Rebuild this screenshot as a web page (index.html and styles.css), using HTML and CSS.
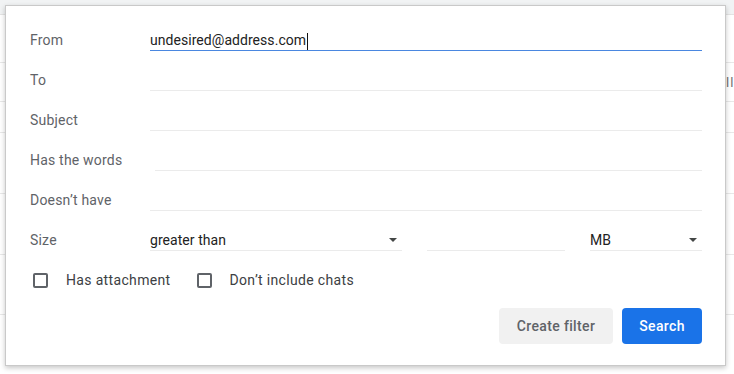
FILE: index.html
```html
<!DOCTYPE html>
<html lang="en">
<head>
<meta charset="utf-8">
<title>Search filter</title>
<link rel="stylesheet" href="styles.css">
</head>
<body>
<div class="page">
  <div class="topbar"></div>
  <div class="bg-row bg-r1"></div>
  <div class="bg-row bg-r2"><span class="bg-text">ll</span></div>
  <div class="bg-row bg-r3"></div>
  <div class="bg-row bg-r4"></div>
  <div class="bg-row bg-r5"></div>
  <div class="bg-row bg-r6"></div>
</div>

<div class="dialog">
  <div class="row">
    <label class="label">From</label>
    <div class="field field-active"><span class="value">undesired@address.com</span><span class="caret"></span></div>
  </div>
  <div class="row">
    <label class="label">To</label>
    <div class="field"></div>
  </div>
  <div class="row">
    <label class="label">Subject</label>
    <div class="field"></div>
  </div>
  <div class="row">
    <label class="label">Has the words</label>
    <div class="field field-shift"></div>
  </div>
  <div class="row">
    <label class="label">Doesn’t have</label>
    <div class="field"></div>
  </div>
  <div class="row">
    <label class="label">Size</label>
    <div class="size-group">
      <div class="select select-op"><span class="value">greater than</span><span class="arrow"></span></div>
      <div class="field field-num"></div>
      <div class="select select-unit"><span class="value">MB</span><span class="arrow"></span></div>
    </div>
  </div>
  <div class="row row-checks">
    <span class="checkbox"></span><span class="check-label">Has attachment</span>
    <span class="checkbox checkbox-2"></span><span class="check-label">Don’t include chats</span>
  </div>
  <div class="actions">
    <button class="btn btn-secondary">Create filter</button>
    <button class="btn btn-primary">Search</button>
  </div>
</div>
</body>
</html>
```

FILE: styles.css
```css
html, body {
  margin: 0;
  padding: 0;
  background: #ffffff;
  font-family: Roboto, "Liberation Sans", Arial, sans-serif;
  overflow: hidden;
}

.page {
  width: 734px;
  height: 374px;
}

.topbar {
  height: 14px;
  background: #f1f3f4;
  border-bottom: 1px solid #e3e3e3;
}

.bg-row {
  border-bottom: 1px solid #e8e8e8;
  box-sizing: border-box;
}

.bg-r1 { height: 48px; }
.bg-r2 {
  height: 39px;
  display: flex;
  align-items: center;
  padding-left: 726px;
  white-space: nowrap;
}
.bg-r3 { height: 31px; }
.bg-r4 { height: 61px; }
.bg-r5 { height: 61px; }
.bg-r6 { height: 60px; }

.bg-text {
  font-size: 13px;
  color: #707070;
  letter-spacing: 1px;
}

.dialog {
  position: absolute;
  left: 5px;
  top: 5px;
  width: 721px;
  height: 361px;
  box-sizing: border-box;
  background: #ffffff;
  border: 1px solid #c9c9c9;
  box-shadow: 0 2px 5px rgba(0, 0, 0, 0.22);
  padding: 14px 23px 0 24px;
  display: flex;
  flex-direction: column;
}

.row {
  height: 40px;
  display: flex;
  align-items: center;
}

.label {
  width: 120px;
  flex: none;
  font-size: 14px;
  color: #5f6368;
  letter-spacing: 0.2px;
}

.field {
  flex: 1;
  height: 20px;
  box-sizing: border-box;
  border-bottom: 1px solid #ebebeb;
  display: flex;
  align-items: center;
  margin-top: 1px;
}

.field-active {
  border-bottom-color: #4a87e0;
}

.field-shift {
  margin-left: 5px;
}

.value {
  font-size: 14px;
  color: #222222;
  line-height: 18px;
  letter-spacing: 0.05px;
}

.caret {
  width: 1px;
  height: 17px;
  background: #111111;
  margin-left: 1px;
  align-self: flex-end;
}

.size-group {
  flex: 1;
  display: flex;
  gap: 25px;
}

.select {
  height: 20px;
  box-sizing: border-box;
  border-bottom: 1px solid #ebebeb;
  display: flex;
  align-items: center;
  justify-content: space-between;
  margin-top: 1px;
}

.select-op { width: 252px; }
.field-num { flex: none; width: 138px; }
.select-unit { flex: 1; }

.arrow {
  width: 0;
  height: 0;
  border-left: 4px solid transparent;
  border-right: 4px solid transparent;
  border-top: 4px solid #444746;
  margin-right: 5px;
}

.row-checks {
  padding-left: 3px;
}

.checkbox {
  width: 15px;
  height: 15px;
  box-sizing: border-box;
  border: 2px solid #5f6368;
  border-radius: 2px;
  flex: none;
}

.checkbox-2 {
  margin-left: 26px;
}

.check-label {
  font-size: 14px;
  color: #3c4043;
  margin-left: 18px;
  letter-spacing: 0.34px;
}

.actions {
  display: flex;
  justify-content: flex-end;
  gap: 9px;
  margin-top: 8px;
}

.btn {
  height: 36px;
  border: none;
  border-radius: 4px;
  font-family: Roboto, "Liberation Sans", Arial, sans-serif;
  font-size: 14px;
  font-weight: 500;
  letter-spacing: 0.35px;
  padding: 0;
}

.btn-secondary {
  width: 114px;
  background: #f1f1f1;
  color: #5f6368;
}

.btn-primary {
  width: 80px;
  background: #1a73e8;
  color: #ffffff;
}
```
